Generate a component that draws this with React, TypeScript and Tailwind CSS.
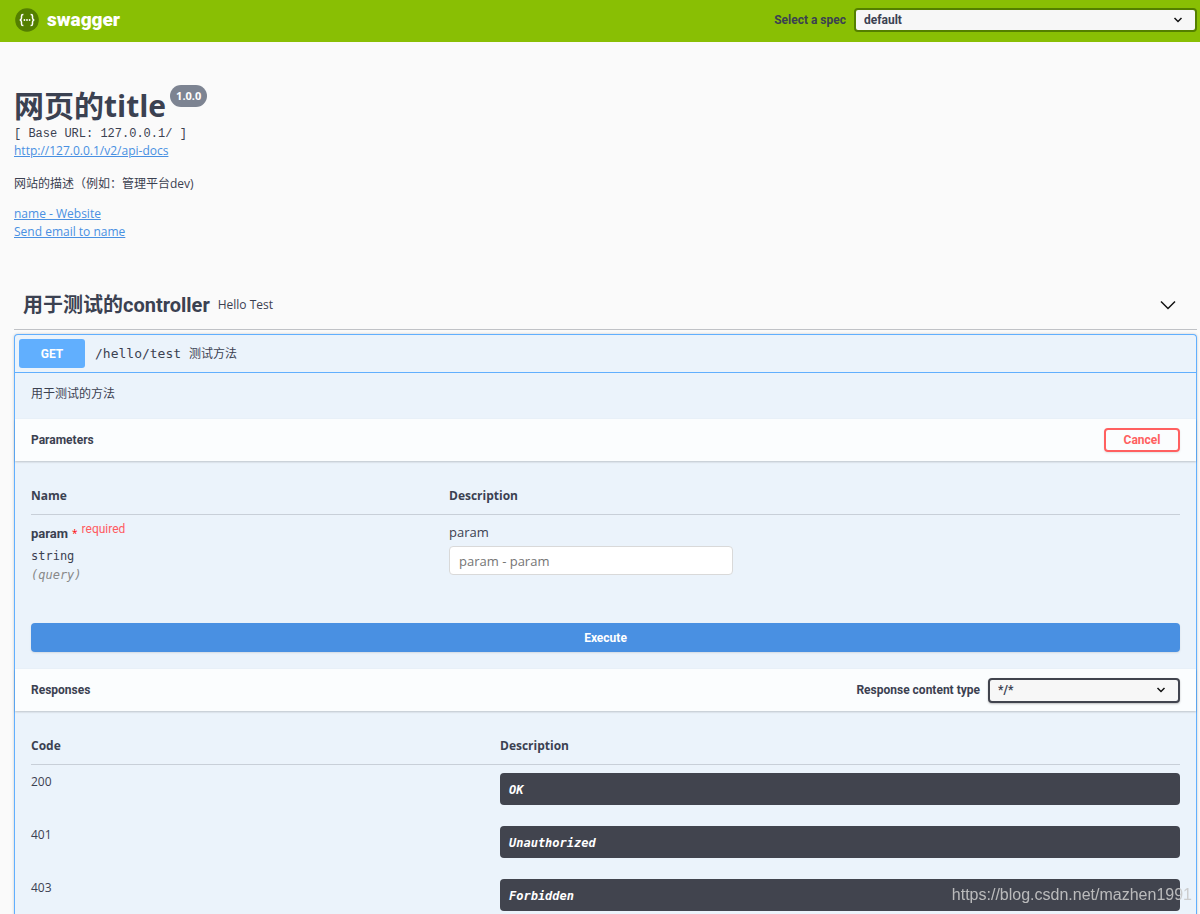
import type { ReactNode } from "react";

const responses = [
  { code: "200", text: "OK" },
  { code: "401", text: "Unauthorized" },
  { code: "403", text: "Forbidden" },
];

const BODY = "font-['Open_Sans','Noto_Sans_CJK_SC',sans-serif]";
const HEADING = "font-['Roboto','Noto_Sans_CJK_SC',sans-serif]";
const MONO = "font-['DejaVu_Sans_Mono','Noto_Sans_CJK_SC',monospace]";

const Logo = () => (
  <a href="#" className="flex items-center gap-2 text-white">
    <svg viewBox="0 0 24 24" className="size-6" aria-hidden="true">
      <circle cx="12" cy="12" r="11.8" fill="#547f00" />
      <g fill="none" stroke="#fff" strokeWidth="1.5">
        <path d="M8.4 6.4H8C7 6.4 6.5 7 6.5 8v2c0 1.2-.5 1.8-1.7 2 1.2.2 1.7.8 1.7 2v2c0 1 .5 1.6 1.5 1.6h.4" />
        <path d="M15.6 6.4h.4c1 0 1.5.6 1.5 1.6v2c0 1.2.5 1.8 1.7 2-1.2.2-1.7.8-1.7 2v2c0 1-.5 1.6-1.5 1.6h-.4" />
      </g>
      <g fill="#fff">
        <circle cx="9.4" cy="12" r=".9" />
        <circle cx="12" cy="12" r=".9" />
        <circle cx="14.6" cy="12" r=".9" />
      </g>
    </svg>
    <span className={`${HEADING} text-[19px] leading-6 font-black`}>swagger</span>
  </a>
);

type SelectBoxProps = {
  id: string;
  value: string;
  className: string;
};

const SelectBox = ({ id, value, className }: SelectBoxProps) => (
  <div className="relative">
    <select
      id={id}
      defaultValue={value}
      className={`${HEADING} block appearance-none rounded border-2 bg-[#f7f7f7] px-2 text-xs font-bold text-[#3b4151] ${className}`}
    >
      <option>{value}</option>
    </select>
    <svg
      viewBox="0 0 10 10"
      className="pointer-events-none absolute top-1/2 right-[14px] size-[10px] -translate-y-1/2"
      aria-hidden="true"
    >
      <path d="M1.5 3 5 6.5 8.5 3" fill="none" stroke="#111" strokeWidth="1.5" />
    </svg>
  </div>
);

const SectionHeader = ({ title, children }: { title: string; children: ReactNode }) => (
  <div className="flex h-[42px] items-center justify-between bg-white/80 px-4 shadow-[0_1px_2px_rgba(0,0,0,0.2)]">
    <h4 className={`${HEADING} text-xs font-bold`}>{title}</h4>
    {children}
  </div>
);

const Th = ({ className = "", children }: { className?: string; children: ReactNode }) => (
  <th className={`border-b border-[#3b4151]/20 pb-2 text-left text-xs leading-5 font-bold ${className}`}>
    {children}
  </th>
);

const Topbar = () => (
  <header className="flex h-[42px] items-center justify-between bg-[#89bf04] pr-[3px] pb-[2px] pl-[15px]">
    <Logo />
    <div className="flex items-center gap-2">
      <label htmlFor="spec" className={`${HEADING} text-xs font-bold`}>
        Select a spec
      </label>
      <SelectBox id="spec" value="default" className="h-6 w-[343px] border-[#547f00]" />
    </div>
  </header>
);

const Info = () => (
  <section className="pt-[43px] text-xs">
    <div className="flex items-start gap-1">
      <h2 className="text-[30px] leading-[41px] font-bold">网页的title</h2>
      <span className="flex h-[22px] items-center rounded-full bg-[#7d8492] px-[6px] text-[11px] font-bold text-white">
        1.0.0
      </span>
    </div>
    <pre className="font-['Liberation_Mono',monospace] leading-4">[ Base URL: 127.0.0.1/ ]</pre>
    <a href="#" className="block w-fit leading-[17px] text-[#4990e2] underline">
      http://127.0.0.1/v2/api-docs
    </a>
    <p className="mt-4 leading-[18px]">网站的描述（例如：管理平台dev)</p>
    <div className="mt-3 leading-[18px] text-[#4990e2]">
      <a href="#" className="block w-fit underline">
        name - Website
      </a>
      <a href="#" className="block w-fit underline">
        Send email to name
      </a>
    </div>
  </section>
);

const Parameters = () => (
  <div className="px-4 pt-[25px] pb-[17px]">
    <table className="w-full">
      <thead>
        <tr>
          <Th className="w-[418px]">Name</Th>
          <Th>Description</Th>
        </tr>
      </thead>
      <tbody>
        <tr className="align-top">
          <td className="pt-2">
            <div className="flex gap-1 leading-5">
              <span className={`${HEADING} pt-px text-[13px] font-bold`}>param</span>
              <span className="text-[10px] text-[#ff0000]">*</span>
              <span className={`${HEADING} text-xs leading-3 text-[#ff5a5f]`}>required</span>
            </div>
            <div className={`${MONO} pt-[2px] text-xs leading-5`}>string</div>
            <div className={`${MONO} text-xs leading-[18px] text-[#888] italic`}>(query)</div>
          </td>
          <td className="pt-2">
            <label htmlFor="param" className="block text-[13px] leading-[18px]">
              param
            </label>
            <input
              id="param"
              type="text"
              placeholder="param - param"
              className="mt-[5px] h-[29px] w-[284px] rounded border border-[#d9d9d9] bg-white px-[9px] text-[13px] placeholder:text-[#757575]"
            />
          </td>
        </tr>
      </tbody>
    </table>
    <button
      type="button"
      className={`${HEADING} mt-[39px] h-[29px] w-full rounded bg-[#4990e2] text-xs font-bold text-white shadow-[0_1px_2px_rgba(0,0,0,0.1)]`}
    >
      Execute
    </button>
  </div>
);

const Responses = () => (
  <div className="px-4 pt-[25px]">
    <table className="w-full">
      <thead>
        <tr>
          <Th className="w-[469px]">Code</Th>
          <Th>Description</Th>
        </tr>
      </thead>
      <tbody>
        {responses.map(({ code, text }) => (
          <tr key={code} className="h-[53px] align-top">
            <td className="pt-2 text-xs leading-[18px]">{code}</td>
            <td className="pt-2">
              <div className={`${MONO} h-8 rounded bg-[#41444e] px-[9px] pt-px text-xs leading-8 font-bold text-white italic`}>
                {text}
              </div>
            </td>
          </tr>
        ))}
      </tbody>
    </table>
  </div>
);

const Operation = () => (
  <article className="mt-1 flex-1 rounded-t border border-b-0 border-[#61affe] bg-[#ebf3fb] shadow-[0_0_3px_rgba(0,0,0,0.19)]">
    <div className="flex h-[38px] items-center border-b border-[#61affe] px-1">
      <button
        type="button"
        className={`${HEADING} h-[29px] w-[66px] rounded-[3px] bg-[#61affe] text-xs font-bold text-white`}
      >
        GET
      </button>
      <span className={`${MONO} pl-[10px] text-[13px]`}>/hello/test</span>
      <span className="pl-2 text-xs">测试方法</span>
    </div>
    <p className="px-4 pt-3 pb-4 text-xs leading-[18px]">用于测试的方法</p>
    <SectionHeader title="Parameters">
      <button
        type="button"
        className={`${HEADING} h-6 w-[76px] rounded border-2 border-[#ff6060] text-xs font-bold text-[#ff6060] shadow-[0_1px_2px_rgba(0,0,0,0.1)]`}
      >
        Cancel
      </button>
    </SectionHeader>
    <Parameters />
    <SectionHeader title="Responses">
      <div className="flex items-center gap-2">
        <label htmlFor="content-type" className={`${HEADING} text-xs font-bold`}>
          Response content type
        </label>
        <SelectBox
          id="content-type"
          value="*/*"
          className="h-[25px] w-[192px] border-[#41444e] shadow-[0_1px_2px_rgba(0,0,0,0.25)]"
        />
      </div>
    </SectionHeader>
    <Responses />
  </article>
);

export default function App() {
  return (
    <div className={`${BODY} flex min-h-screen flex-col bg-[#fafafa] text-[#3b4151]`}>
      <Topbar />
      <main className="flex flex-1 flex-col pr-[3px] pl-[14px]">
        <Info />
        <div className="mt-10 flex h-[49px] items-center border-b border-[#3b4151]/30 pr-[21px] pl-[9px]">
          <h3 className={`${HEADING} text-[20px] leading-6 font-bold`}>用于测试的controller</h3>
          <span className="pl-2 text-xs">Hello Test</span>
          <button type="button" aria-label="Collapse" className="ml-auto">
            <svg viewBox="0 0 16 10" className="h-[10px] w-4" aria-hidden="true">
              <path d="M1 1.5 8 8.5 15 1.5" fill="none" stroke="#111" strokeWidth="1.5" />
            </svg>
          </button>
        </div>
        <Operation />
      </main>
      <span className="fixed right-2 bottom-2 font-['Liberation_Sans',sans-serif] text-base leading-[22px] text-[#c8c8c8]/90">
        https://blog.csdn.net/mazhen1991
      </span>
    </div>
  );
}
